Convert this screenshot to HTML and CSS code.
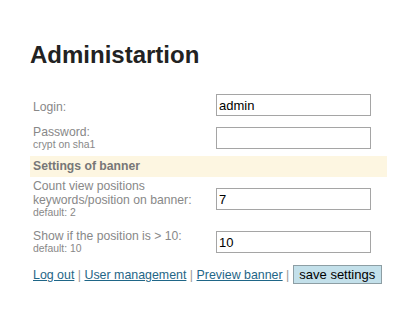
FILE: index.html
```html
<!DOCTYPE html>
<html lang="en">
<head>
  <meta charset="UTF-8">
  <title>Administartion</title>
  <link rel="stylesheet" href="styles.css">
</head>
<body>
  <div class="page">
    <h1>Administartion</h1>

    <table class="settings">
      <tr class="row-login">
        <td class="label">Login:</td>
        <td class="field"><input type="text" value="admin"></td>
      </tr>
      <tr class="row-password">
        <td class="label">Password:<span class="hint">crypt on sha1</span></td>
        <td class="field"><input type="password"></td>
      </tr>
      <tr class="band">
        <td colspan="2">Settings of banner</td>
      </tr>
      <tr class="row-count">
        <td class="label">Count view positions keywords/position on banner:<span class="hint">default: 2</span></td>
        <td class="field"><input type="text" value="7"></td>
      </tr>
      <tr class="row-show">
        <td class="label">Show if the position is &gt; 10:<span class="hint">default: 10</span></td>
        <td class="field"><input type="text" value="10"></td>
      </tr>
    </table>

    <div class="actions">
      <a href="#">Log out</a> <span class="sep">|</span>
      <a href="#">User management</a> <span class="sep">|</span>
      <a href="#">Preview banner</a> <span class="sep">|</span>
      <button type="submit">save settings</button>
    </div>
  </div>
</body>
</html>
```

FILE: styles.css
```css
body {
  margin: 0;
  font-family: "Liberation Sans", Arial, sans-serif;
  background-color: #fff;
  color: #222;
}

.page {
  padding: 41px 0 0 30px;
  width: 357px;
}

h1 {
  font-size: 24px;
  line-height: 28px;
  margin: 0 0 21px;
  color: #222;
}

.settings {
  width: 357px;
  border-collapse: collapse;
}

.settings td {
  padding: 4px 0;
  vertical-align: middle;
}

.settings .row-login td {
  padding-bottom: 5px;
}

.settings .row-password td {
  padding-bottom: 5px;
}

.settings .row-count td {
  padding-top: 2px;
  padding-bottom: 5px;
}

.settings .row-show td {
  padding-top: 5px;
}

.settings td.label {
  width: 183px;
  padding-left: 3px;
  font-size: 12.2px;
  line-height: 14px;
  color: #888;
}

.row-login td.label {
  padding-top: 7px;
}

.hint {
  display: block;
  font-size: 10.4px;
  line-height: 12px;
  color: #888;
}

.field input {
  display: block;
  width: 155px;
  height: 22px;
  box-sizing: border-box;
  padding: 0 2px;
  border: 1px solid #a5a5a5;
  font-family: "Liberation Sans", Arial, sans-serif;
  font-size: 13px;
  color: #000;
}

.settings .band td {
  padding: 3px 3px;
  background-color: #fdf6e1;
  font-size: 12.2px;
  line-height: 15px;
  font-weight: bold;
  color: #777;
}

.actions {
  margin-top: 6px;
  padding-left: 3px;
  font-size: 12.4px;
  color: #999;
}

.actions a {
  color: #1f6687;
}

.actions button {
  width: 89px;
  height: 19px;
  padding: 0;
  border: 1px solid #8d9ea4;
  background-color: #c3e0ea;
  font-family: "Liberation Sans", Arial, sans-serif;
  font-size: 13px;
  color: #000;
}
```
